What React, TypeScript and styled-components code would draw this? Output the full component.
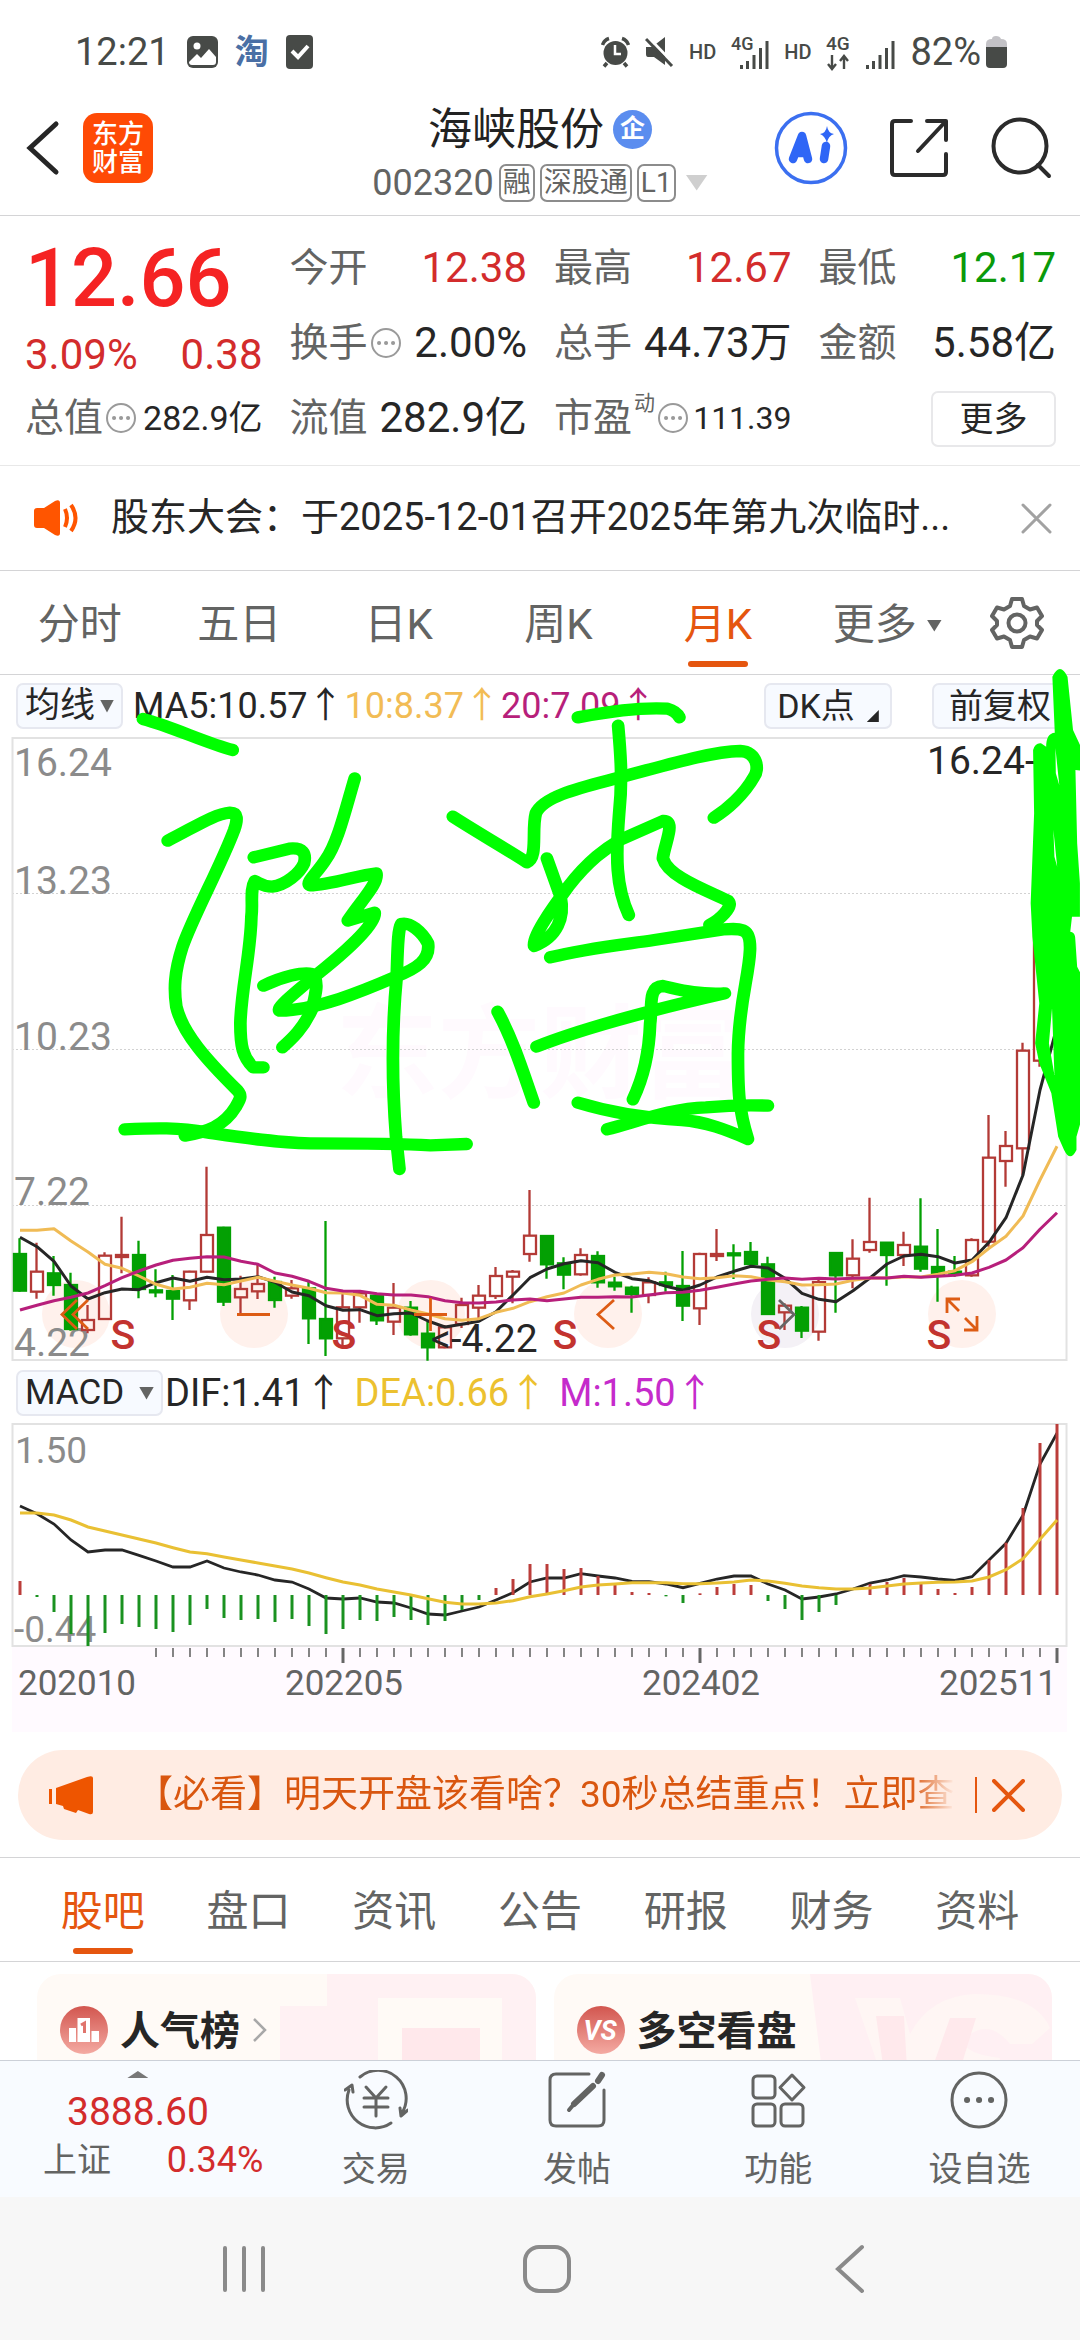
import React from "react";
import styled, { createGlobalStyle } from "styled-components";

const fontStack = `Roboto, "Noto Sans CJK SC", sans-serif`;
const ink = "#262626";
const grey = "#636463";
const orange = "#e5560f";
const red = "#d32c2c";
const green = "#0a9a0a";

const GlobalStyle = createGlobalStyle`
  * { box-sizing: border-box; }
  body { margin: 0; background: #fff; font-family: ${fontStack}; line-height: 1.2; color: ${ink}; }
  button, select { font: inherit; color: inherit; background: none; border: 0; padding: 0; margin: 0; cursor: pointer; }
  svg { display: block; flex: none; }
`;

const Page = styled.div`
  display: flex;
  flex-direction: column;
  height: 100vh;
`;

const StatusBar = styled.div`
  display: flex;
  flex: none;
  justify-content: space-between;
  align-items: center;
  height: 72px;
  padding: 32px 73px 0 75px;
  color: #474a47;
  font-size: 38px;
  line-height: 40px;
`;

const StatusGroup = styled.div<{ $gap: number }>`
  display: flex;
  align-items: center;
  gap: ${(p) => p.$gap}px;
`;

const Taobao = styled.span`
  color: #4a6fa5;
  font-size: 34px;
  font-weight: 700;
`;

const HdMark = styled.span`
  font-size: 20px;
  font-weight: 500;
`;

const TitleBar = styled.header`
  display: grid;
  flex: none;
  grid-template-columns: 1fr auto 1fr;
  align-items: center;
  height: 144px;
  padding: 0 28px 0 24px;
  border-bottom: 1px solid #d4d4d6;
`;

const TitleSide = styled.div<{ $end?: boolean }>`
  display: flex;
  align-items: center;
  justify-content: ${(p) => (p.$end ? "flex-end" : "flex-start")};
  gap: ${(p) => (p.$end ? 41 : 23)}px;
  padding-top: 9px;
`;

const Logo = styled.div`
  width: 70px;
  height: 70px;
  padding: 7px 0;
  border-radius: 14px;
  background: #ff4a05;
  color: #fff;
  font-size: 26px;
  font-weight: 500;
  line-height: 28px;
  text-align: center;
`;

const TitleCenter = styled.div`
  display: flex;
  flex-direction: column;
  align-items: center;
  gap: 10px;
  padding: 20px 0 0 4px;
`;

const StockName = styled.h1`
  display: flex;
  align-items: center;
  gap: 9px;
  margin: 0;
  color: #222;
  font-size: 44px;
  font-weight: 400;
  line-height: 48px;
`;

const EnterpriseBadge = styled.span`
  width: 39px;
  height: 39px;
  border-radius: 50%;
  background: #5b8def;
  color: #fff;
  font-size: 25px;
  font-weight: 700;
  line-height: 37px;
  text-align: center;
`;

const StockCode = styled.div`
  display: flex;
  align-items: center;
  gap: 5px;
  color: ${grey};
  font-size: 36px;
  line-height: 38px;
`;

const Tag = styled.span`
  height: 38px;
  padding: 0 2px;
  border: 2px solid #8c8c8c;
  border-radius: 7px;
  font-size: 28px;
  line-height: 34px;
`;

const Triangle = styled.span<{ $w: number; $h: number; $color: string; $up?: boolean }>`
  width: ${(p) => p.$w}px;
  height: ${(p) => p.$h}px;
  background: ${(p) => p.$color};
  clip-path: ${(p) => (p.$up ? "polygon(50% 0, 100% 100%, 0 100%)" : "polygon(0 0, 100% 0, 50% 100%)")};
`;

const CodeArrow = styled(Triangle)`
  margin-left: 5px;
`;

const Scroll = styled.main`
  flex: 1;
  min-height: 0;
  overflow-y: auto;
  scrollbar-width: none;
`;

const Content = styled.div`
  position: relative;
`;

const Quote = styled.section`
  display: grid;
  grid-template-columns: repeat(4, 1fr);
  grid-template-rows: repeat(3, 75px);
  column-gap: 27px;
  height: 250px;
  padding: 15px 24px 0 25px;
  border-bottom: 1px solid #e8e8e8;
`;

const PriceBlock = styled.div`
  display: flex;
  flex-direction: column;
  grid-row: span 2;
`;

const Price = styled.strong`
  height: 87px;
  color: #f52323;
  font-size: 81px;
  font-weight: 500;
  line-height: 96px;
`;

const Change = styled.div`
  display: flex;
  justify-content: space-between;
  color: ${red};
  font-size: 42px;
  line-height: 74px;
`;

const Stat = styled.div`
  display: flex;
  align-items: center;
  justify-content: space-between;
  white-space: nowrap;
`;

const StatLabel = styled.span`
  display: flex;
  align-items: center;
  gap: 2px;
  color: ${grey};
  font-size: 39px;
`;

const StatValue = styled.span<{ $color?: string; $size?: number }>`
  color: ${(p) => p.$color || ink};
  font-size: ${(p) => p.$size || 42}px;
`;

const Sup = styled.sup`
  align-self: flex-start;
  font-size: 21px;
  line-height: 16px;
`;

const MoreCell = styled.div`
  display: flex;
  align-items: center;
  justify-content: flex-end;
`;

const MoreButton = styled.button`
  width: 125px;
  height: 56px;
  border: 2px solid #e8e8ea;
  border-radius: 7px;
  font-size: 34px;
  line-height: 50px;
`;

const Notice = styled.section`
  display: flex;
  align-items: center;
  height: 105px;
  padding: 0 28px 0 32px;
  border-bottom: 1px solid #d4d4d6;
`;

const NoticeText = styled.span`
  flex: 1;
  padding-left: 32px;
  font-size: 38px;
  white-space: nowrap;
`;

const PeriodTabs = styled.nav`
  display: flex;
  height: 104px;
  padding-right: 36px;
  border-bottom: 1px solid #d4d4d6;
`;

const Tab = styled.button<{ $active?: boolean; $grow?: number }>`
  display: flex;
  position: relative;
  flex: ${(p) => p.$grow || 160} 1 0;
  align-items: center;
  justify-content: center;
  gap: 10px;
  padding-top: 6px;
  color: ${(p) => (p.$active ? orange : grey)};
  font-size: 42px;
  white-space: nowrap;

  &::after {
    content: "";
    display: ${(p) => (p.$active ? "block" : "none")};
    position: absolute;
    bottom: 7px;
    left: 50%;
    width: 60px;
    height: 6px;
    margin-left: -30px;
    border-radius: 3px;
    background: ${orange};
  }
`;

const IndicatorBar = styled.div`
  display: flex;
  align-items: center;
  height: 62px;
  padding: 0 12px 0 16px;
  white-space: nowrap;
`;

const Picker = styled.label<{ $gap: number }>`
  display: flex;
  align-items: center;
  gap: ${(p) => p.$gap}px;
  height: 46px;
  padding: 0 7px;
  border: 2px solid #e6e8f0;
  border-radius: 7px;
  background: #f7faff;
`;

const PickerSelect = styled.select`
  appearance: none;
  font-size: 35px;
  line-height: 40px;
`;

const Readings = styled.div<{ $inset: number }>`
  display: flex;
  flex: 1;
  padding: 2px 0 0 ${(p) => p.$inset}px;
`;

const Reading = styled.span<{ $color: string; $large?: boolean }>`
  margin-left: ${(p) => (p.$large ? 2 : 0)}px;
  padding-right: ${(p) => (p.$large ? 10 : 1)}px;
  color: ${(p) => p.$color};
  font-size: ${(p) => (p.$large ? 38 : 36)}px;
`;

const ChipGroup = styled.div`
  display: flex;
  gap: 40px;
`;

const ChipButton = styled.button<{ $wide?: boolean }>`
  display: flex;
  align-items: center;
  justify-content: center;
  gap: 12px;
  width: ${(p) => (p.$wide ? 136 : 128)}px;
  height: 46px;
  border: 2px solid #e6e8f0;
  border-radius: 7px;
  background: #f7faff;
  font-size: 34px;
  line-height: 40px;
`;

const Corner = styled.span`
  align-self: flex-end;
  width: 12px;
  height: 12px;
  margin-bottom: 5px;
  background: ${ink};
  clip-path: polygon(100% 0, 100% 100%, 0 100%);
`;

const Chart = styled.svg`
  width: 100%;
  height: auto;
  overflow: visible;
  font-family: ${fontStack};
`;

const BannerArea = styled.section`
  padding: 17px 18px 17px;
  border-bottom: 1px solid #d4d4d6;
`;

const Banner = styled.div`
  display: flex;
  align-items: center;
  height: 90px;
  padding: 0 37px 0 29px;
  border-radius: 45px;
  background: #ffece3;
  color: ${orange};
`;

const BannerText = styled.a`
  flex: 1;
  min-width: 0;
  margin: 0 20px 0 42px;
  overflow: hidden;
  color: #d9560f;
  font-size: 37px;
  text-decoration: none;
  white-space: nowrap;
  mask-image: linear-gradient(90deg, #000 calc(100% - 45px), transparent);
`;

const Rule = styled.span`
  width: 2px;
  height: 36px;
  margin-right: 15px;
  background: ${orange};
`;

const SectionTabs = styled.nav`
  display: flex;
  height: 104px;
  padding: 0 30px;
  border-bottom: 1px solid #d4d4d6;
`;

const Cards = styled.section`
  display: grid;
  grid-template-columns: 1fr 1fr;
  gap: 18px;
  height: 98px;
  padding: 12px 28px 0 37px;
  overflow: hidden;
`;

const Card = styled.a`
  display: flex;
  position: relative;
  align-items: center;
  gap: 12px;
  height: 112px;
  padding: 0 23px;
  overflow: hidden;
  border-radius: 24px 24px 0 0;
  background: #fffaf6;
  color: ${ink};
  font-size: 40px;
  font-weight: 700;
  text-decoration: none;
`;

const CardArt = styled.svg`
  position: absolute;
  top: 0;
  right: 0;
`;

const CardTitle = styled.span`
  position: relative;
  padding-top: 4px;
`;

const BottomBar = styled.footer`
  display: grid;
  flex: none;
  grid-template-columns: 275fr repeat(4, 201fr);
  height: 137px;
  border-top: 1px solid #ccd0d8;
  background: #f8fbff;
`;

const IndexBox = styled.button`
  display: flex;
  flex-direction: column;
  align-items: center;
  padding: 10px 12px 0 43px;
  text-align: left;
`;

const IndexTop = styled.span`
  display: flex;
  flex-direction: column;
  align-items: center;
  align-self: flex-start;
  gap: 10px;
  padding-left: 24px;
  color: ${red};
  font-size: 39px;
  line-height: 48px;
`;

const IndexRow = styled.span`
  display: flex;
  align-items: center;
  align-self: stretch;
  justify-content: space-between;
  color: ${grey};
  font-size: 34px;
  line-height: 48px;
`;

const IndexChange = styled.span`
  color: ${red};
  font-size: 36px;
`;

const Action = styled.button`
  display: flex;
  flex-direction: column;
  align-items: center;
  gap: 14px;
  padding-top: 9px;
  color: ${grey};
  font-size: 34px;
  line-height: 50px;
`;

const SystemNav = styled.nav`
  display: grid;
  flex: none;
  grid-template-columns: repeat(3, 1fr);
  place-items: center;
  height: 143px;
  padding: 0 79px 0 92px;
  background: #f7f7f7;
`;

type Candle = [up: number, high: number, top: number, bottom: number, low: number];

const candles: Candle[] = [
  [0, 355, 402, 512, 515], [1, 368, 455, 515, 536], [0, 408, 460, 495, 527], [0, 458, 495, 627, 632],
  [1, 555, 600, 630, 640], [1, 397, 407, 597, 600], [1, 290, 405, 410, 460], [0, 362, 405, 507, 535],
  [0, 448, 511, 515, 532], [0, 465, 513, 536, 600], [1, 452, 455, 541, 570], [1, 140, 345, 455, 457],
  [0, 320, 323, 545, 558], [1, 467, 507, 532, 580], [1, 435, 492, 514, 537], [0, 470, 486, 540, 563],
  [1, 480, 505, 527, 536], [0, 480, 505, 595, 672], [0, 303, 597, 655, 708], [1, 515, 562, 655, 675],
  [1, 510, 520, 562, 608], [0, 520, 527, 601, 615], [1, 489, 563, 605, 645], [0, 543, 563, 643, 647],
  [0, 605, 641, 682, 722], [1, 615, 622, 682, 685], [1, 533, 555, 612, 624], [1, 495, 527, 563, 605],
  [1, 441, 468, 528, 537], [1, 450, 455, 470, 550], [1, 210, 347, 402, 425], [0, 345, 348, 433, 476],
  [0, 412, 430, 464, 508], [1, 385, 405, 463, 467], [0, 394, 408, 487, 503], [0, 470, 488, 499, 512],
  [0, 497, 503, 522, 578], [1, 472, 487, 525, 550], [0, 455, 487, 495, 515], [0, 393, 498, 557, 603],
  [1, 398, 402, 565, 615], [1, 327, 402, 406, 423], [0, 373, 400, 404, 477], [0, 366, 396, 432, 440],
  [0, 410, 433, 582, 585], [1, 550, 557, 577, 630], [0, 558, 563, 632, 654], [1, 480, 486, 635, 662],
  [0, 397, 399, 466, 578], [1, 358, 416, 466, 505], [1, 233, 366, 390, 398], [0, 367, 368, 405, 497],
  [1, 335, 375, 405, 438], [0, 235, 380, 446, 455], [0, 327, 441, 466, 545], [0, 408, 455, 459, 470],
  [1, 355, 360, 466, 470], [1, -15, 113, 365, 380], [1, 33, 78, 123, 200], [1, -232, -208, 85, 165],
  [1, -1080, -700, -178, -160],
];

const ma5 = [352, 380, 424, 498, 537, 518, 507, 509, 488, 474, 484, 472, 479, 477, 470, 487, 516, 527, 557, 571, 569, 587, 581, 579, 603, 621, 613, 604, 575, 525, 473, 447, 431, 422, 428, 457, 476, 482, 499, 511, 495, 471, 454, 439, 444, 475, 520, 538, 545, 512, 474, 432, 408, 403, 410, 429, 420, 367, 293, 165, -90, -280];
const ma10 = [331, 331, 326, 363, 396, 433, 445, 468, 493, 507, 502, 490, 494, 483, 472, 484, 495, 505, 518, 519, 526, 553, 556, 570, 582, 596, 601, 596, 577, 565, 545, 530, 519, 495, 478, 465, 462, 457, 461, 471, 476, 473, 467, 470, 480, 485, 495, 494, 492, 481, 474, 474, 471, 471, 463, 452, 425, 385, 349, 288, 180, 79];
const ma20 = [570, 556, 542, 532, 519, 497, 473, 453, 435, 421, 415, 410, 411, 424, 433, 459, 469, 484, 505, 513, 514, 521, 525, 525, 530, 542, 548, 549, 546, 540, 537, 542, 537, 532, 532, 530, 531, 525, 518, 517, 511, 502, 492, 483, 478, 474, 478, 475, 477, 475, 474, 474, 469, 472, 469, 466, 459, 442, 420, 383, 328, 278];
const bars = [663, 711, 756, 822, 858, 819, 792, 801, 807, 816, 795, 747, 774, 780, 777, 786, 777, 798, 822, 807, 780, 783, 771, 780, 795, 783, 750, 720, 684, 657, 612, 612, 627, 624, 648, 672, 696, 699, 709, 729, 700, 681, 672, 675, 723, 747, 780, 756, 735, 705, 672, 666, 654, 672, 687, 699, 681, 600, 548, 444, 249, 192];
const dif = [438, 461, 492, 540, 576, 570, 570, 586, 603, 621, 621, 603, 624, 636, 645, 660, 666, 687, 714, 717, 714, 726, 729, 744, 762, 765, 753, 741, 720, 698, 666, 654, 654, 641, 648, 654, 664, 665, 672, 683, 670, 657, 648, 648, 672, 690, 717, 711, 702, 687, 669, 660, 647, 651, 657, 661, 650, 600, 550, 466, 312, 220];
const dea = [459, 459, 465, 480, 501, 513, 525, 537, 549, 563, 576, 581, 591, 600, 609, 618, 627, 639, 653, 666, 675, 687, 696, 705, 716, 727, 732, 732, 729, 722, 710, 702, 692, 681, 675, 672, 668, 668, 668, 671, 671, 669, 666, 660, 663, 670, 678, 683, 687, 687, 684, 678, 672, 669, 667, 666, 663, 651, 629, 596, 538, 480];

const monthX = (i: number) => 20 + 17 * i;
const priceY = (v: number) => 1120 + v / 3;
const macdY = (v: number) => 1360 + v / 3;
const line = (values: number[], scale: (v: number) => number) =>
  values.map((v, i) => `${monthX(i)},${scale(v).toFixed(1)}`).join(" ");

function CandleMark({ index, data }: { index: number; data: Candle }) {
  const [up, high, top, bottom, low] = data;
  const x = monthX(index);
  const color = up ? "#b33a36" : "#03a003";
  const height = Math.max(2, (bottom - top) / 3);
  return (
    <g stroke={color} strokeWidth={2.3}>
      <path d={`M${x - 0.5} ${priceY(high)}V${priceY(top)}M${x - 0.5} ${priceY(bottom)}V${priceY(low)}`} />
      <rect x={x - 6} y={priceY(top)} width={12} height={height} fill={up ? "none" : color} />
    </g>
  );
}

function PriceChart() {
  return (
    <Chart viewBox="0 737 1080 625" role="img" aria-label="月K线">
      <g fill="#fffafe" fontSize={102} fontWeight={700}>
        <text x={336} y={1090}>东方财富</text>
      </g>
      {[76, 254, 431, 608, 785, 962].map((x) => (
        <circle key={x} cx={x} cy={1314} r={34} fill={x === 785 ? "#f4f1f6" : "#fff1ec"} />
      ))}
      <g stroke="#d2d2d2" strokeDasharray="2 2">
        <path d="M12 893.500H1067M12 1049.500H1067M12 1205.500H1067" />
      </g>
      <rect x={12.5} y={738} width={1054} height={622} fill="none" stroke="#e2e2e2" strokeWidth={2} />
      <g fill="#8b8b8b" fontSize={39}>
        <text x={14} y={776}>16.24</text>
        <text x={14} y={894}>13.23</text>
        <text x={14} y={1050}>10.23</text>
        <text x={14} y={1205}>7.22</text>
        <text x={14} y={1356}>4.22</text>
      </g>
      {candles.map((c, i) => (
        <CandleMark key={i} index={i} data={c} />
      ))}
      <g fill="none" strokeWidth={3} strokeLinejoin="round">
        <polyline points={line(ma5, priceY)} stroke="#262626" />
        <polyline points={line(ma10, priceY)} stroke="#f0bb55" />
        <polyline points={line(ma20, priceY)} stroke="#b71f7b" />
      </g>
      <g fill="none" stroke="#dd5c14" strokeWidth={2.8}>
        <path d="M77 1300L62 1314.500L77 1329M88 1300L73 1314.500L88 1329" />
        <path d="M237 1314.500H270M414 1314.500H447M430.500 1298V1331" />
        <path d="M614 1300L598 1314.500L614 1329" />
        <path d="M779 1300L794 1314.500L779 1329" stroke="#666" />
        <path d="M947 1313V1299H960M947 1299L959 1311M977 1316V1330H964M977 1330L965 1318" />
      </g>
      <g fill="#c2332f" fontSize={41} fontWeight={500} textAnchor="middle">
        {[123, 344, 565, 769, 939].map((x) => (
          <text key={x} x={x} y={1349}>S</text>
        ))}
      </g>
      <g fill={ink} fontSize={39}>
        <text x={431} y={1352}>&lt;-4.22</text>
        <text x={927} y={774}>16.24-</text>
      </g>
    </Chart>
  );
}

function MacdChart() {
  return (
    <Chart viewBox="0 1424 1080 309" role="img" aria-label="MACD">
      <rect x={12} y={1647} width={1055} height={85} fill="#fffaff" />
      <rect x={12.5} y={1424} width={1054} height={222} fill="#fff" stroke="#e2e2e2" strokeWidth={2} />
      <g fill="#8b8b8b" fontSize={37}>
        <text x={15} y={1463}>1.50</text>
        <text x={14} y={1642}>-0.44</text>
      </g>
      <polyline points={line(dif, macdY)} fill="none" stroke="#262626" strokeWidth={2.8} />
      {bars.map((v, i) => (
        <path key={i} d={`M${monthX(i)} 1595V${macdY(v)}`} stroke={v < 705 ? "#bb3d3a" : "#1a9220"} strokeWidth={3} />
      ))}
      <polyline points={line(dea, macdY)} fill="none" stroke="#e9c033" strokeWidth={3} />
      {bars.map((_, i) => {
        const major = i === 19 || i === 40 || i === 61;
        if (i < 8) return null;
        return <path key={i} d={`M${monthX(i)} 1648V${major ? 1663 : 1657}`} stroke="#666" strokeWidth={major ? 3 : 1.6} />;
      })}
      <g fill={grey} fontSize={35} textAnchor="middle">
        <text x={77} y={1695}>202010</text>
        <text x={344} y={1695}>202205</text>
        <text x={701} y={1695}>202402</text>
        <text x={998} y={1695}>202511</text>
      </g>
    </Chart>
  );
}

const Ink = styled.svg`
  position: absolute;
  top: 0;
  left: 0;
  width: 100%;
  height: auto;
  pointer-events: none;
`;

function Handwriting() {
  return (
    <Ink viewBox="0 216 1080 1600" aria-hidden="true">
      <g transform="translate(0 670) scale(.34436 .33333)">
        <g fill="none" stroke="#00ff00" strokeWidth={37} strokeLinecap="round" strokeLinejoin="round">
          <path d="M415 147C500 170 600 220 676 240" />
          <path d="M487 512C560 475 620 432 668 428C692 428 690 450 680 480C640 590 560 740 530 830C505 910 505 960 512 1010C530 1090 600 1170 690 1262C705 1280 695 1290 685 1310C650 1370 600 1385 537 1397" />
          <path d="M362 1378C450 1374 520 1372 600 1387C700 1402 800 1418 900 1420C1050 1420 1150 1420 1250 1426L1355 1422" />
          <path d="M737 562L840 536C880 532 890 550 883 580C870 610 830 645 790 650C765 650 755 640 740 633C725 660 735 700 730 740C728 850 700 960 698 1060C698 1130 705 1160 735 1192L765 1192" />
          <path d="M1030 325C1000 430 980 520 945 570C920 610 885 640 900 646C960 645 1040 615 1093 610C1100 640 1050 690 1010 752L1088 728C1095 760 1000 850 900 930C850 975 800 1015 812 1022C920 1020 1050 965 1150 920C1210 895 1250 870 1243 820C1225 785 1190 755 1165 762C1155 780 1155 830 1152 920C1140 1050 1135 1200 1150 1400L1160 1497" />
          <path d="M765 947C820 920 880 905 905 912C930 930 915 980 905 1020C880 1075 850 1105 820 1132" />
          <path d="M1315 440C1390 490 1460 530 1530 577C1563 565 1543 480 1556 430C1580 375 1700 350 1808 320C1920 290 2060 245 2150 243C2200 245 2205 300 2190 320C2160 375 2110 420 2073 443" />
          <path d="M1678 142C1768 125 1848 112 1938 116C1960 122 1968 132 1973 142" />
          <path d="M1795 167C1803 260 1808 330 1798 430C1788 560 1788 650 1826 735" />
          <path d="M1588 565L1628 680C1640 740 1620 800 1551 828C1545 800 1600 720 1650 650C1710 570 1760 535 1800 510L1925 453C1965 450 1930 520 1925 565C1940 620 2050 660 2115 693C2130 710 2090 750 2060 765" />
          <path d="M1598 862C1700 835 1800 825 1900 810L2100 778C2160 775 2180 775 2178 840C2175 920 2145 1000 2143 1150C2143 1260 2145 1320 2172 1407C2110 1380 2050 1355 1980 1350C1880 1345 1780 1330 1678 1298" />
          <path d="M1763 1378C1850 1355 1950 1315 2050 1312C2130 1305 2180 1305 2230 1307" />
          <path d="M1558 1130C1680 1080 1850 1030 2105 970C2020 975 1960 955 1925 948C1880 950 1895 1010 1888 1060C1885 1150 1870 1220 1838 1288" />
          <path d="M1445 1025C1490 1110 1520 1210 1550 1298" />
        </g>
        <path
          fill="#00ff00"
          fillRule="evenodd"
          transform="translate(1568 0)"
          d="M1432 240Q1438 218 1455 220L1470 230Q1470 190 1495 188L1488 20Q1510 -26 1532 20L1548 180L1575 240V302L1555 300L1560 520L1568 640V740L1545 740L1540 785Q1552 786 1554 800L1560 890L1575 920V1340L1558 1400V1440Q1540 1478 1522 1440L1505 1400L1485 1270L1450 1180L1438 1120L1450 1000L1430 800L1425 700L1435 430ZM1487 1015L1494 1215L1478 1120ZM1497 235L1508 345L1498 310ZM1491 480L1502 590L1494 560Z"
        />
      </g>
    </Ink>
  );
}

function MoreDots() {
  return (
    <svg width="32" height="32" viewBox="0 0 32 32" fill="none" stroke="#9a9a9a" strokeWidth="2">
      <circle cx="16" cy="16" r="14" />
      <path d="M9 16h.1M16 16h.1M23 16h.1" strokeWidth="4" strokeLinecap="round" />
    </svg>
  );
}

function Cross({ size, color, width }: { size: number; color: string; width: number }) {
  return (
    <svg width={size} height={size} viewBox={`0 0 ${size} ${size}`} stroke={color} strokeWidth={width} strokeLinecap="round">
      <path d={`M2 2L${size - 2} ${size - 2}M${size - 2} 2L2 ${size - 2}`} />
    </svg>
  );
}

function Signal({ badge }: { badge?: boolean }) {
  return (
    <svg width={badge ? 38 : 29} height="40" viewBox={badge ? "0 -4 38 40" : "9 -4 29 40"} fill="#474a47" fontFamily="Roboto">
      {badge && <text x="0" y="14" fontSize="18" fontWeight="500">4G</text>}
      <path d="M9 29h3v4h-3zM15 25h3v8h-3zM21.500 19h3v14h-3zM28 12h3v21h-3zM34.500 5h3v28h-3z" />
    </svg>
  );
}

function Status() {
  return (
    <StatusBar>
      <StatusGroup $gap={17}>
        <span>12:21</span>
        <svg width="31" height="32" viewBox="0 0 31 32">
          <rect width="31" height="32" rx="6" fill="#474a47" />
          <circle cx="10" cy="10" r="3.500" fill="#fff" />
          <path d="M2 26L10 18L14 22L22 13L29 21V26Q29 29 26 29H5Q2 29 2 26Z" fill="#fff" />
        </svg>
        <Taobao>淘</Taobao>
        <svg width="27" height="34" viewBox="0 0 27 34">
          <rect width="27" height="34" rx="4" fill="#474a47" />
          <path d="M6 16l6 6 10-11" fill="none" stroke="#fff" strokeWidth="4" />
        </svg>
      </StatusGroup>
      <StatusGroup $gap={15}>
        <svg width="29" height="32" viewBox="0 0 29 32">
          <circle cx="14.500" cy="17" r="12" fill="#474a47" />
          <path d="M1.500 9Q3 4 8 2.500M27.500 9Q26 4 21 2.500M6 27l-3 3.500M23 27l3 3.500" stroke="#474a47" strokeWidth="3.500" fill="none" />
          <path d="M14 9v9h6" stroke="#fff" strokeWidth="2.500" fill="none" />
        </svg>
        <svg width="29" height="32" viewBox="0 0 29 32">
          <path d="M1 11h6L20 1v28L9 21H3Q1 21 1 18Z" fill="#474a47" />
          <path d="M3 1L30 29" stroke="#fff" strokeWidth="3" />
          <path d="M1 3L27 30" stroke="#474a47" strokeWidth="3" />
        </svg>
        <HdMark>HD</HdMark>
        <Signal badge />
        <HdMark>HD</HdMark>
        <svg width="25" height="40" viewBox="0 -3 25 40" fill="#474a47" fontFamily="Roboto">
          <text x="0" y="15" fontSize="19" fontWeight="500">4G</text>
          <path d="M6 20v13M2 29l4 5 4-5M18 34V21M14 26l4-5 4 5" fill="none" stroke="#474a47" strokeWidth="2.400" />
        </svg>
        <Signal />
        <StatusGroup $gap={5}>
          <span>82%</span>
          <svg width="21" height="32" viewBox="0 0 21 32">
            <path d="M6 3Q6 0 10 0T15 3Q21 3 21 8V14H0V8Q0 3 6 3Z" fill="#c3c2c6" />
            <path d="M0 11H21V28Q21 32 17 32H4Q0 32 0 28Z" fill="#474a47" />
          </svg>
        </StatusGroup>
      </StatusGroup>
    </StatusBar>
  );
}

const IconButton = styled.button`
  flex: none;
`;

const GearButton = styled(IconButton)`
  margin-left: 13px;
`;

function Header() {
  return (
    <TitleBar>
      <TitleSide>
        <IconButton aria-label="返回">
          <svg width="36" height="56" viewBox="0 0 36 56" fill="none" stroke="#262626" strokeWidth="5" strokeLinecap="round">
            <path d="M32 4L6 28L32 52" />
          </svg>
        </IconButton>
        <Logo>东方<br />财富</Logo>
      </TitleSide>
      <TitleCenter>
        <StockName>海峡股份<EnterpriseBadge>企</EnterpriseBadge></StockName>
        <StockCode>
          002320
          <Tag>融</Tag>
          <Tag>深股通</Tag>
          <Tag>L1</Tag>
          <CodeArrow $w={22} $h={16} $color="#cfcfcf" />
        </StockCode>
      </TitleCenter>
      <TitleSide $end>
        <IconButton aria-label="Ai">
          <svg width="74" height="74" viewBox="0 0 74 74">
            <circle cx="37" cy="37" r="34.500" fill="#fff" stroke="#3b6ff0" strokeWidth="3.500" />
            <g fill="none" stroke="#2f66f6" strokeLinecap="round" strokeLinejoin="round" strokeWidth="8.500">
              <path d="M19 48L28 25L34 48M23 42H32" />
              <path d="M52 35L50 48" />
            </g>
            <path d="M53 15Q54 22 60 23Q54 25 53 32Q51 25 46 23Q52 22 53 15Z" fill="#2f66f6" />
          </svg>
        </IconButton>
        <IconButton aria-label="分享">
          <svg width="60" height="60" viewBox="0 0 60 60" fill="none" stroke="#2b2b2b" strokeWidth="4" strokeLinecap="round" strokeLinejoin="round">
            <path d="M22 3H6Q3 3 3 6V54Q3 57 6 57H54Q57 57 57 54V36M38 3H57V22M57 3L29 33" />
          </svg>
        </IconButton>
        <IconButton aria-label="搜索">
          <svg width="62" height="62" viewBox="0 0 62 62" fill="none" stroke="#2b2b2b" strokeWidth="4" strokeLinecap="round">
            <circle cx="30" cy="29" r="26.500" />
            <path d="M48 48L59 59" />
          </svg>
        </IconButton>
      </TitleSide>
    </TitleBar>
  );
}

function QuotePanel() {
  return (
    <Quote>
      <PriceBlock>
        <Price>12.66</Price>
        <Change><span>3.09%</span><span>0.38</span></Change>
      </PriceBlock>
      <Stat><StatLabel>今开</StatLabel><StatValue $color={red}>12.38</StatValue></Stat>
      <Stat><StatLabel>最高</StatLabel><StatValue $color={red}>12.67</StatValue></Stat>
      <Stat><StatLabel>最低</StatLabel><StatValue $color={green}>12.17</StatValue></Stat>
      <Stat><StatLabel>换手<MoreDots /></StatLabel><StatValue>2.00%</StatValue></Stat>
      <Stat><StatLabel>总手</StatLabel><StatValue>44.73万</StatValue></Stat>
      <Stat><StatLabel>金额</StatLabel><StatValue>5.58亿</StatValue></Stat>
      <Stat><StatLabel>总值<MoreDots /></StatLabel><StatValue $size={34}>282.9亿</StatValue></Stat>
      <Stat><StatLabel>流值</StatLabel><StatValue>282.9亿</StatValue></Stat>
      <Stat><StatLabel>市盈<Sup>动</Sup><MoreDots /></StatLabel><StatValue $size={32}>111.39</StatValue></Stat>
      <MoreCell><MoreButton>更多</MoreButton></MoreCell>
    </Quote>
  );
}

function Badge({ kind }: { kind: "rank" | "vs" }) {
  return (
    <svg width="48" height="48" viewBox="0 0 48 48">
      <defs>
        <linearGradient id={`badge-${kind}`} x1="0" y1="0" x2="0" y2="1">
          <stop offset="0" stopColor="#d2564f" />
          <stop offset="1" stopColor="#f4aaa2" />
        </linearGradient>
      </defs>
      <circle cx="24" cy="24" r="24" fill={`url(#badge-${kind})`} />
      {kind === "rank" ? (
        <>
          <path d="M9 22H16V36H9ZM17.500 12H30V36H17.500ZM31.500 25H39V36H31.500Z" fill="#fff" />
          <path d="M21 19L24.500 17V27" stroke="#e0746c" strokeWidth="3" fill="none" />
        </>
      ) : (
        <text x="23" y="34" fill="#fff" fontFamily="Roboto" fontSize="27" fontWeight="700" fontStyle="italic" textAnchor="middle">VS</text>
      )}
    </svg>
  );
}

const BadgeBox = styled.span`
  position: relative;
`;

const actions = [
  {
    name: "交易",
    icon: (
      <>
        <path d="M16 7A28 28 0 0 1 58 43M47 53A28 28 0 0 1 5 20M1 20L8 15L9 22M64 40L57 46L56 38" />
        <path d="M22 17L32 28L42 17M20 28H44M20 37H44M32 28V46" />
      </>
    ),
  },
  {
    name: "发帖",
    icon: (
      <>
        <path d="M44 4H11Q5 4 5 10V50Q5 56 11 56H53Q59 56 59 50V20" />
        <path d="M57 5L53 11" strokeWidth="6" />
        <path d="M48 16L29 34" strokeWidth="6" />
        <path d="M29 34L24 40" strokeWidth="4" />
      </>
    ),
  },
  {
    name: "功能",
    icon: (
      <>
        <rect x="7" y="6" width="22" height="22" rx="4" />
        <rect x="7" y="34" width="22" height="22" rx="4" />
        <rect x="35" y="34" width="22" height="22" rx="4" />
        <path d="M46 5L58 17.500L46 30L34 17.500Z" />
      </>
    ),
  },
  {
    name: "设自选",
    icon: (
      <>
        <circle cx="32" cy="30" r="27" />
        <path d="M20 30h.1M32 30h.1M44 30h.1" strokeWidth="6" />
      </>
    ),
  },
];

export default function App() {
  return (
    <Page>
      <GlobalStyle />
      <Status />
      <Header />
      <Scroll>
        <Content>
          <QuotePanel />
          <Notice>
            <svg width="47" height="40" viewBox="0 0 47 40">
              <path d="M2 13Q2 10 5 10H12L23 3Q28 1 28 5V35Q28 39 23 37L12 30H5Q2 30 2 27Z" fill="#ff5500" />
              <path d="M33 11Q37 20 33 29M39 7Q48 20 39 33" fill="none" stroke="#ff5500" strokeWidth="4" />
            </svg>
            <NoticeText>股东大会：于2025-12-01召开2025年第九次临时...</NoticeText>
            <IconButton aria-label="关闭公告"><Cross size={31} color="#a2a2a2" width={3} /></IconButton>
          </Notice>
          <PeriodTabs>
            <Tab>分时</Tab>
            <Tab>五日</Tab>
            <Tab>日K</Tab>
            <Tab>周K</Tab>
            <Tab $active>月K</Tab>
            <Tab $grow={180}>更多<Triangle $w={15} $h={12} $color="#636463" /></Tab>
            <GearButton aria-label="设置">
              <svg width="54" height="54" viewBox="0 0 54 54" fill="none" stroke="#636463" strokeWidth="4" strokeLinejoin="round">
                <path d="M22 3H32L34 10L40 13.500L47 11.500L52 20L47 25V29L52 34L47 42.500L40 40.500L34 44L32 51H22L20 44L14 40.500L7 42.500L2 34L7 29V25L2 20L7 11.500L14 13.500L20 10Z" />
                <circle cx="27" cy="27" r="8.500" />
              </svg>
            </GearButton>
          </PeriodTabs>
          <IndicatorBar>
            <Picker $gap={4}>
              <PickerSelect aria-label="主图指标"><option>均线</option></PickerSelect>
              <Triangle $w={14} $h={13} $color="#636463" />
            </Picker>
            <Readings $inset={10}>
              <Reading $color={ink}>MA5:10.57↑</Reading>
              <Reading $color="#f2bc55">10:8.37↑</Reading>
              <Reading $color="#b71f7b">20:7.09↑</Reading>
            </Readings>
            <ChipGroup>
              <ChipButton>DK点<Corner /></ChipButton>
              <ChipButton $wide>前复权</ChipButton>
            </ChipGroup>
          </IndicatorBar>
          <PriceChart />
          <IndicatorBar>
            <Picker $gap={14}>
              <PickerSelect aria-label="副图指标"><option>MACD</option></PickerSelect>
              <Triangle $w={15} $h={13} $color="#636463" />
            </Picker>
            <Readings $inset={0}>
              <Reading $large $color={ink}>DIF:1.41↑</Reading>
              <Reading $large $color="#ecc12f">DEA:0.66↑</Reading>
              <Reading $large $color="#c52bcb">M:1.50↑</Reading>
            </Readings>
          </IndicatorBar>
          <MacdChart />
          <BannerArea>
            <Banner>
              <svg width="47" height="40" viewBox="0 0 47 40" fill="#ee5500">
                <path d="M2 14H5V29H2ZM9 13L40 2Q46 0 46 3V37Q46 40 42 39L31 35L29 38L17 34L16 31L9 29Z" />
              </svg>
              <BannerText href="#">【必看】明天开盘该看啥？30秒总结重点！立即查</BannerText>
              <Rule />
              <IconButton aria-label="关闭"><Cross size={33} color={orange} width={4} /></IconButton>
            </Banner>
          </BannerArea>
          <SectionTabs>
            {["股吧", "盘口", "资讯", "公告", "研报", "财务", "资料"].map((name, i) => (
              <Tab key={name} $active={i === 0}>{name}</Tab>
            ))}
          </SectionTabs>
          <Cards>
            <Card href="#">
              <CardArt width="256" height="112" viewBox="0 0 256 112">
                <path d="M47 0H256V112H0V32H47Z" fill="#fff1f3" />
                <path d="M98 24H222V112H98Z" fill="#fffaf6" />
                <path d="M122 54H200V112H122Z" fill="#ffe8eb" />
              </CardArt>
              <BadgeBox><Badge kind="rank" /></BadgeBox>
              <CardTitle>人气榜</CardTitle>
              <svg width="16" height="26" viewBox="0 0 16 26" fill="none" stroke="#a8a8a8" strokeWidth="2.500">
                <path d="M2 2L13 13L2 24" />
              </svg>
            </Card>
            <Card href="#">
              <CardArt width="242" height="112" viewBox="0 0 242 112">
                <path d="M0 0H242V112H14Z" fill="#fff0f3" />
                <path d="M45 24H90L100 60Q120 22 165 20Q225 20 240 54L222 70H200Q180 45 158 62Q145 78 190 84L185 112H75Z" fill="#fff6f4" />
                <path d="M66 42H94L98 112H76ZM140 44H166L145 112H116Z" fill="#ffe9ec" />
              </CardArt>
              <BadgeBox><Badge kind="vs" /></BadgeBox>
              <CardTitle>多空看盘</CardTitle>
            </Card>
          </Cards>
          <Handwriting />
        </Content>
      </Scroll>
      <BottomBar>
        <IndexBox>
          <IndexTop>
            <Triangle $w={21} $h={7} $color="#777" $up />
            3888.60
          </IndexTop>
          <IndexRow>上证<IndexChange>0.34%</IndexChange></IndexRow>
        </IndexBox>
        {actions.map((a) => (
          <Action key={a.name}>
            <svg width="64" height="60" viewBox="0 0 64 60" fill="none" stroke="#636463" strokeWidth="3" strokeLinecap="round" strokeLinejoin="round">
              {a.icon}
            </svg>
            {a.name}
          </Action>
        ))}
      </BottomBar>
      <SystemNav>
        <IconButton aria-label="最近任务">
          <svg width="48" height="50" viewBox="0 0 48 50" stroke="#8a8a8a" strokeWidth="4" strokeLinecap="round">
            <path d="M5 4V46M24 4V46M43 4V46" />
          </svg>
        </IconButton>
        <IconButton aria-label="主屏幕">
          <svg width="50" height="50" viewBox="0 0 50 50" fill="none" stroke="#8a8a8a" strokeWidth="4">
            <rect x="3" y="3" width="44" height="44" rx="14" />
          </svg>
        </IconButton>
        <IconButton aria-label="后退">
          <svg width="32" height="50" viewBox="0 0 32 50" fill="none" stroke="#8a8a8a" strokeWidth="4" strokeLinecap="round">
            <path d="M28 3L4 25L28 47" />
          </svg>
        </IconButton>
      </SystemNav>
    </Page>
  );
}
